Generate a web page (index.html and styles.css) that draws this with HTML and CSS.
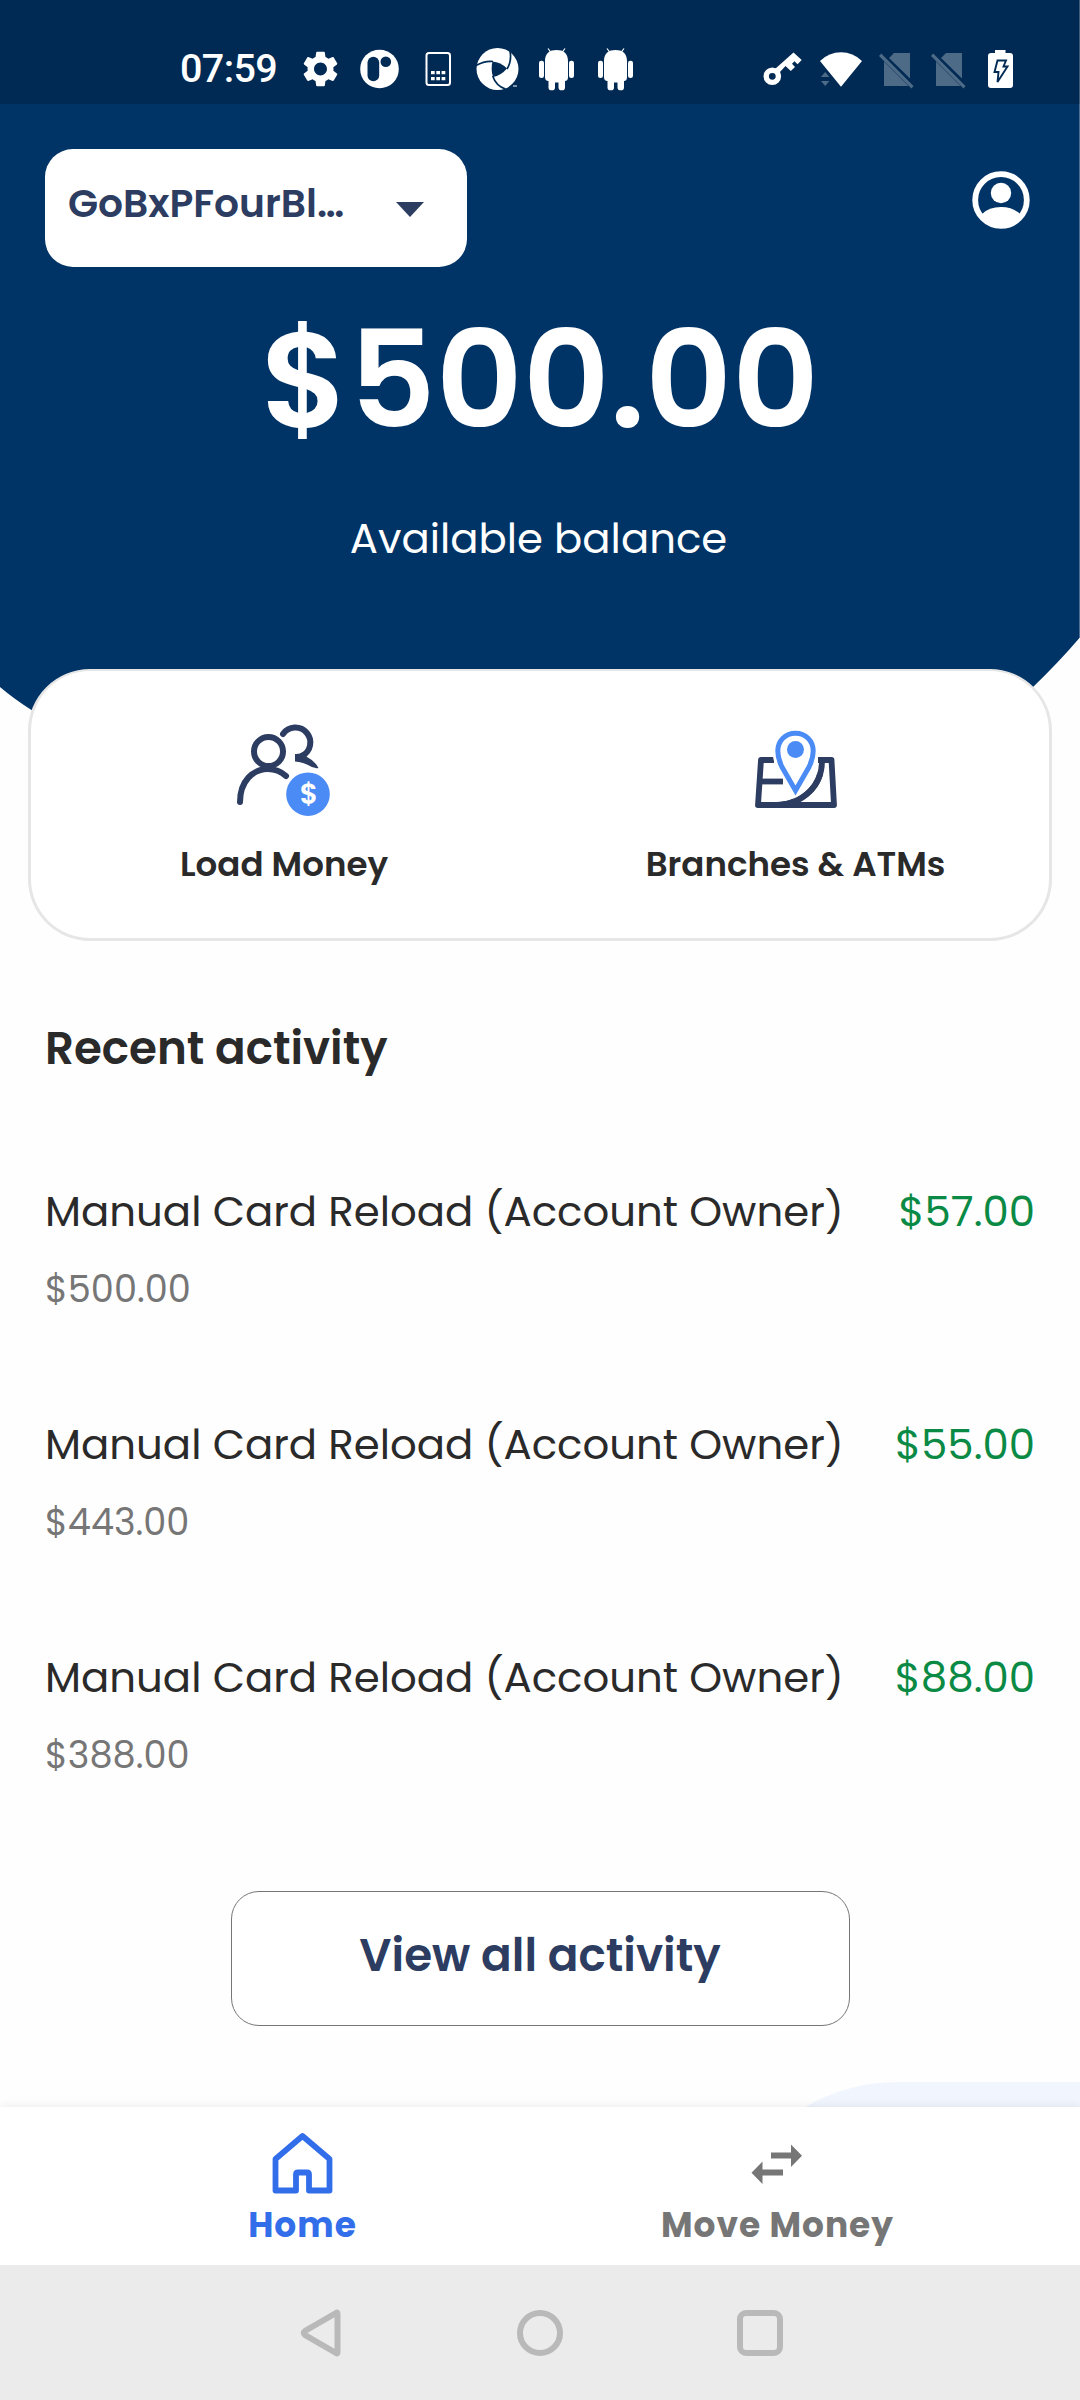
FILE: index.html
```html
<!DOCTYPE html>
<html lang="en">
<head>
<meta charset="utf-8">
<title>Home</title>
<link rel="stylesheet" href="styles.css">
</head>
<body>
<svg class="hero-shape" viewBox="0 0 1080 760" aria-hidden="true">
  <path fill="#003366" d="M0 0H1079V638.500Q1058 663 1032 688L980 730H60L33 711Q14 699 0 687Z"/>
  <path fill="#4d7094" d="M1079 0h1v638h-1z"/>
</svg>

<header class="status">
  <div class="status-group">
    <span class="clock">07:59</span>
    <svg class="glyph" viewBox="0 0 59 84"><g transform="translate(7.900 47.400) scale(1.800)"><path d="M19.140 12.940c.040-.300.060-.610.060-.940 0-.320-.020-.640-.070-.940l2.030-1.580c.180-.140.230-.410.120-.610l-1.920-3.320c-.120-.220-.370-.290-.590-.220l-2.390.960c-.500-.380-1.030-.700-1.620-.940l-.360-2.540c-.040-.240-.240-.410-.480-.410h-3.840c-.240 0-.430.170-.470.410l-.360 2.540c-.590.240-1.130.570-1.620.940l-2.390-.960c-.220-.080-.470 0-.590.220L2.740 8.870c-.120.210-.080.470.120.610l2.030 1.580c-.050.300-.090.630-.090.940s.020.640.070.940l-2.030 1.580c-.180.140-.230.410-.120.610l1.920 3.320c.120.220.370.290.590.220l2.390-.960c.500.380 1.030.700 1.620.940l.360 2.540c.050.240.240.410.480.410h3.840c.240 0 .440-.170.470-.410l.360-2.540c.590-.240 1.130-.560 1.620-.940l2.390.960c.220.080.470 0 .590-.220l1.920-3.320c.120-.220.070-.470-.120-.610l-2.010-1.580zM12 15.600c-1.980 0-3.600-1.620-3.600-3.600s1.620-3.600 3.600-3.600 3.600 1.620 3.600 3.600-1.620 3.600-3.600 3.600z"/></g></svg>
    <svg class="glyph" viewBox="0 0 59 84"><circle cx="29.500" cy="69" r="19.300"/><rect class="cut" x="17.500" y="56.700" width="11.700" height="24.600" rx="5.850"/><circle class="cut" cx="35.800" cy="61.800" r="5.300"/></svg>
    <svg class="glyph" viewBox="0 0 59 84"><rect x="17.500" y="53" width="23.500" height="32" rx="2.500" fill="none" stroke="#fff" stroke-width="2"/><path d="M22 71h3.700v3.300H22zM27.300 71h3.700v3.300h-3.700zM32.600 71h3.700v3.300h-3.700zM22 77h3.700v3.300H22zM27.300 77h3.700v3.300h-3.700zM32.600 77h3.700v3.300h-3.700z"/></svg>
    <svg class="glyph" viewBox="0 0 59 84"><circle cx="29.500" cy="69" r="21"/><path class="cut" d="M24.500 61.500Q32.500 62 39 68.500Q33 75.500 25 77Q22.500 69 24.500 61.500Z"/><path d="M39 69Q44 61 42 51M25 61.500Q17 60.500 8 65.500M24.700 76Q28 86 37.500 89" fill="none" stroke="#002b54" stroke-width="1.700"/><path d="M45 86h4" stroke="#fff"/></svg>
    <svg class="glyph" viewBox="0 0 59 84"><path d="M18 61C18 53 23 50 29.500 50S41 53 41 61V77Q41 81 38 81V87.500a2.500 2.200 0 0 1-6.500 0V82.500H28V87.500a2.500 2.200 0 0 1-6.500 0V81Q18 81 18 77Z"/><rect x="12" y="60.700" width="5" height="17.300" rx="2.300"/><rect x="42" y="60.700" width="5" height="17.300" rx="2.300"/><path d="M24 52.500l-3-4M35 52.500l3-4" stroke="#fff" stroke-width="1.200"/></svg>
    <svg class="glyph" viewBox="0 0 59 84"><path d="M18 61C18 53 23 50 29.500 50S41 53 41 61V77Q41 81 38 81V87.500a2.500 2.200 0 0 1-6.500 0V82.500H28V87.500a2.500 2.200 0 0 1-6.500 0V81Q18 81 18 77Z"/><rect x="12" y="60.700" width="5" height="17.300" rx="2.300"/><rect x="42" y="60.700" width="5" height="17.300" rx="2.300"/><path d="M24 52.500l-3-4M35 52.500l3-4" stroke="#fff" stroke-width="1.200"/></svg>
  </div>
  <div class="status-group system">
    <svg class="glyph" viewBox="0 0 58 84"><circle cx="18.300" cy="76.300" r="6.100" fill="none" stroke="#fff" stroke-width="5.400"/><path d="M21 69L39.500 52.500L47.700 60L43.500 64.300L40.500 61.300L38 63.700L41 67L36.800 71L31.500 66L25.500 72.500Z"/></svg>
    <svg class="glyph" viewBox="0 0 58 84"><path d="M8 61Q17 52.300 29 52.300T50 61L29 86.700Z"/><path class="dim" d="M9 77l4.200-5 4.200 5zM9 81h8.400l-4.200 5z"/></svg>
    <svg class="glyph sim" viewBox="0 0 52 84"><path class="dim" d="M24 53H40V78.500L19 58ZM14 61.500L38.500 86H14ZM9 56L11.200 53.500L43.500 86L41.500 88.500Z"/></svg>
    <svg class="glyph sim" viewBox="0 0 52 84"><path class="dim" d="M24 53H40V78.500L19 58ZM14 61.500L38.500 86H14ZM9 56L11.200 53.500L43.500 86L41.500 88.500Z"/></svg>
    <svg class="glyph batt" viewBox="0 0 53 84"><path d="M21 53V50h10.500v3H36a3 3 0 0 1 3 3V85a3 3 0 0 1-3 3H17a3 3 0 0 1-3-3V56a3 3 0 0 1 3-3Z"/><path d="M23.500 60.500H32L29.500 66.500H33.500L23.500 82L24.500 72H20.500Z" fill="#fff" stroke="#002b54" stroke-width="1.900"/></svg>
  </div>
</header>

<section class="hero">
  <div class="account-row">
    <button class="selector"><span>GoBxPFourBl…</span><i class="caret"></i></button>
    <svg class="profile" viewBox="0 0 58 58"><circle cx="29" cy="29" r="25.800" fill="none" stroke="#fff" stroke-width="5.800"/><circle cx="29" cy="22" r="10.200" fill="#fff"/><path fill="#fff" d="M10 43Q17 36 29 36T48 43L42 51Q36 55.500 29 55.500T16 51Z"/></svg>
  </div>
  <div class="amount">$500.00</div>
  <div class="caption">Available balance</div>
</section>

<section class="actions">
  <div class="action load">
    <svg viewBox="0 0 100 100">
      <g fill="none" stroke="#2d3c61" stroke-width="6" stroke-linecap="round">
        <circle cx="34.500" cy="36.500" r="14.500"/>
        <path d="M6 87C6 66 19 54 34 54C42 54 47 56.500 52 61"/>
        <path d="M49 19A15 15 0 1 1 68 41"/>
      </g>
      <path fill="#2d3c61" d="M61 39Q66 39.500 69 37L73 42Q81 46 84.500 53Q80 54 74 50Q67 46.500 61 46.500Z"/>
      <circle cx="74" cy="79.200" r="21.800" fill="#4b8bf5"/>
      <text class="coin" x="74.800" y="89" text-anchor="middle">$</text>
    </svg>
    <span>Load Money</span>
  </div>
  <div class="action branches">
    <svg viewBox="0 0 100 100">
      <g fill="none" stroke="#2d3c61" stroke-width="5.800" stroke-linejoin="round">
        <path d="M28 45H15L12 90H88L85.500 45H72"/>
        <path d="M14 66.500H37"/>
        <path d="M76 46C76 71 57 89 31 90"/>
      </g>
      <path fill="#fff" stroke="#fff" stroke-width="7" d="M49.500 79L36 55C31 46 30 42 30 35.500C30 24 39 15.500 49.500 15.500S69 24 69 35.500C69 42 68 46 63 55Z"/>
      <path fill="#fff" stroke="#4b8bf5" stroke-width="5" d="M49.500 75.500L36 52C32.500 45 31.800 41 31.800 36C31.800 25.500 39.500 18.200 49.500 18.200S67.200 25.500 67.200 36C67.200 41 66.500 45 63 52Z"/>
      <circle cx="49.500" cy="34.500" r="8.500" fill="#4b8bf5"/>
      <path d="M76 46C76 71 57 89 31 90" fill="none" stroke="#2d3c61" stroke-width="5.800" stroke-dasharray="0 13 52 100"/>
    </svg>
    <span>Branches &amp; ATMs</span>
  </div>
</section>

<main>
  <h2>Recent activity</h2>
  <ul class="list">
    <li><div class="line"><span>Manual Card Reload (Account Owner)</span><span class="credit">$57.00</span></div><div class="running">$500.00</div></li>
    <li><div class="line"><span>Manual Card Reload (Account Owner)</span><span class="credit">$55.00</span></div><div class="running">$443.00</div></li>
    <li><div class="line"><span>Manual Card Reload (Account Owner)</span><span class="credit">$88.00</span></div><div class="running">$388.00</div></li>
  </ul>
  <button class="view-all">View all activity</button>
  <svg class="promo" viewBox="0 0 300 25"><path fill="#f1f5fd" d="M25 25Q68 0 119 0H300V25Z"/></svg>
</main>

<nav class="tabs">
  <div class="tab active">
    <svg viewBox="0 0 70 70"><path fill="none" stroke="#336eea" stroke-width="5.800" stroke-linejoin="round" d="M7.500 30L34.500 7L61.500 30V61.500H41V45.500Q41 43.500 39 43.500H30Q28 43.500 28 45.500V61.500H7.500Z"/></svg>
    <span>Home</span>
  </div>
  <div class="tab">
    <svg viewBox="0 0 70 70"><path fill="#767676" d="M28 23.500H48V15.500L59 26.700L48 38V29.500H28ZM40 40.500H19.500V32.500L8.500 43.700L19.500 55V46.500H40Z"/></svg>
    <span>Move Money</span>
  </div>
</nav>

<footer class="sysnav">
  <svg viewBox="0 0 60 60"><path d="M47.500 10.500V49.500Q47.500 51 46 50L15 32Q12.500 30 15 28L46 10Q47.500 9 47.500 10.500Z"/></svg>
  <svg viewBox="0 0 60 60"><circle cx="30" cy="30" r="20"/></svg>
  <svg viewBox="0 0 60 60"><rect x="10" y="10" width="40" height="40" rx="6"/></svg>
</footer>
</body>
</html>
```
FILE: styles.css
```css
* { box-sizing: border-box; }

body {
  margin: 0;
  width: 1080px;
  height: 2400px;
  display: flex;
  flex-direction: column;
  position: relative;
  overflow: hidden;
  background: #fefefe;
  color: #2a2a2a;
  font-family: Poppins, Inter, sans-serif;
}

button {
  font-family: inherit;
  background: #fff;
  border: 0;
  padding: 0;
}

/* Curved backdrop behind the balance and the actions card */
.hero-shape {
  position: absolute;
  top: 0;
  left: 0;
  width: 1080px;
  height: 760px;
  z-index: -1;
}

.status {
  height: 104px;
  flex: none;
  display: flex;
  justify-content: space-between;
  padding: 0 53px 0 180px;
  background: rgba(0, 0, 0, .17);
}
.status-group { display: flex; }
.clock {
  width: 110.500px;
  padding-top: 44px;
  font: 500 39.500px/50px Roboto, sans-serif;
  letter-spacing: -.6px;
  color: #fff;
}
.glyph {
  width: 59px;
  height: 84px;
  fill: #fff;
  overflow: visible;
}
.system .glyph { width: 58px; }
.system .sim { width: 52px; }
.system .batt { width: 53px; }
.cut { fill: #002b54; }
.dim { fill: #4d6b87; }

.hero {
  height: 565px;
  flex: none;
  padding-top: 45px;
  text-align: center;
  color: #fff;
}
.account-row {
  display: flex;
  justify-content: space-between;
  align-items: flex-start;
  height: 118px;
  padding: 0 50px 0 45px;
}
.selector {
  display: flex;
  justify-content: space-between;
  width: 422px;
  height: 118px;
  padding: 31px 43px 0 23px;
  border-radius: 28px;
  color: #2d3c61;
  font-size: 39.200px;
  line-height: 48px;
  font-weight: 600;
}
.caret {
  margin-top: 22px;
  width: 28px;
  height: 15px;
  background: #2d3c61;
  clip-path: polygon(0 0, 100% 0, 50% 100%);
}
.profile {
  width: 58px;
  height: 58px;
  margin-top: 22px;
}
.amount {
  margin-top: 33px;
  font-size: 134.800px;
  line-height: 160px;
  font-weight: 600;
}
.caption {
  margin-top: 49px;
  padding-right: 3px;
  font-size: 41.800px;
  line-height: 60px;
}

.actions {
  flex: none;
  display: grid;
  grid-template-columns: 1fr 1fr;
  height: 272px;
  margin: 0 28px;
  background: #fff;
  border: 3px solid #e6e6e6;
  border-top-width: 2px;
  border-radius: 62px;
}
.action {
  display: flex;
  flex-direction: column;
  align-items: center;
  padding-top: 43.500px;
  font-size: 34.050px;
  line-height: 48px;
  font-weight: 600;
}
.load { padding-right: 3px; }
.branches { padding-left: 2px; }
.action svg {
  width: 100px;
  height: 100px;
  margin-bottom: 25px;
  overflow: visible;
}
.coin {
  font: 600 28px Poppins, sans-serif;
  fill: #fff;
}

main {
  height: 1166px;
  flex: none;
  display: flex;
  flex-direction: column;
  padding-top: 78px;
}
h2 {
  margin: 0 45px 103px;
  font-size: 45.200px;
  line-height: 60px;
  font-weight: 600;
}
.list {
  margin: 0;
  padding: 0 45px;
  list-style: none;
  display: grid;
  gap: 100px;
}
.list li { height: 133px; }
.line {
  display: flex;
  justify-content: space-between;
  font-size: 41.850px;
  line-height: 60px;
}
.credit { color: #0a8a45; }
.running {
  margin-top: 22px;
  font-size: 36.700px;
  line-height: 50px;
  color: #767676;
}
.view-all {
  align-self: center;
  width: 619px;
  height: 135px;
  margin: 110px 0 56px;
  padding-bottom: 7px;
  border: 1px solid #767676;
  border-radius: 28px;
  font-size: 45.300px;
  font-weight: 600;
  color: #2d3c61;
}
.promo {
  width: 300px;
  height: 25px;
  align-self: flex-end;
}

.tabs {
  height: 158px;
  flex: none;
  display: grid;
  grid-template-columns: 1fr 1fr;
  padding: 0 65px;
  background: #fff;
  box-shadow: 0 0 10px rgba(0, 0, 0, .09);
}
.tab {
  display: flex;
  flex-direction: column;
  align-items: center;
  padding-top: 22px;
  font-size: 34.400px;
  line-height: 50px;
  font-weight: 700;
  letter-spacing: 1px;
  color: #767676;
}
.tab svg {
  width: 70px;
  height: 70px;
  margin-bottom: 1px;
}
.active { color: #336eea; }

.sysnav {
  height: 135px;
  flex: none;
  display: flex;
  justify-content: center;
  gap: 160px;
  padding-top: 38px;
  background: #ebebeb;
  z-index: 1;
}
.sysnav svg {
  width: 60px;
  height: 60px;
  fill: none;
  stroke: #b9b9b9;
  stroke-width: 6;
}
```
